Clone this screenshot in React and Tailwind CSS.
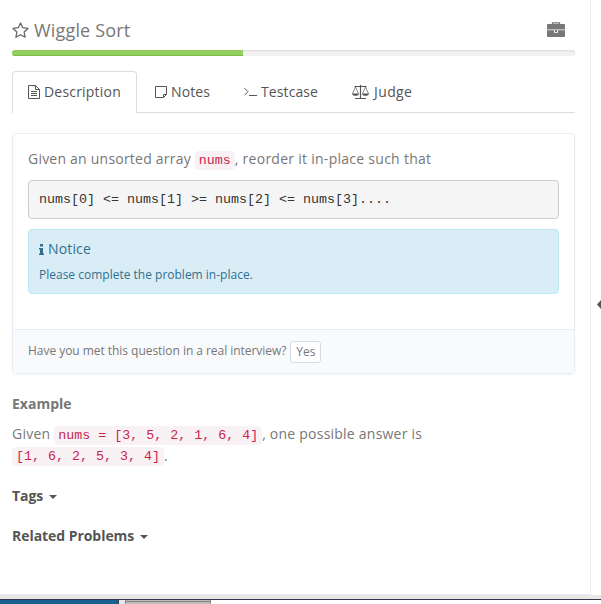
import React from "react";

const MONO = "font-['Liberation_Mono','Courier_New',monospace] text-[13.333px] tracking-normal";

function Code({ children }) {
  return (
    <code className={`${MONO} mt-px h-[19px] shrink-0 whitespace-pre rounded bg-[#f9f2f4] px-1 leading-[19px] text-[#c7254e]`}>
      {children}
    </code>
  );
}

function FileIcon() {
  return (
    <svg width="12" height="14" viewBox="0 0 12 14" fill="none" stroke="#555" className="shrink-0">
      <path d="M.5.5h7l4 4v9H.5zM7.5.5v4h4M3 6.5h6M3 8.5h6M3 10.5h6" />
    </svg>
  );
}

function NoteIcon() {
  return (
    <svg width="12" height="12" viewBox="0 0 12 12" fill="none" stroke="#555" className="shrink-0">
      <path d="M.5.5h11v8l-3 3H.5zM8.500 11.500v-3h3" />
    </svg>
  );
}

function TerminalIcon() {
  return (
    <svg width="13" height="10" viewBox="0 0 13 10" fill="none" stroke="#555" className="shrink-0">
      <path d="M.5 1.200l3.500 3.500-3.500 3.500M5 8.500h8" />
    </svg>
  );
}

function ScaleIcon() {
  return (
    <svg width="17" height="14" viewBox="0 0 17 14" fill="none" stroke="#555" className="shrink-0">
      <path d="M2.500 1.500h12M3 13.500h11" />
      <path strokeWidth="1.200" d="M8.500 0v13" />
      <path strokeWidth=".7" d="M3.500 2l-3 6.500M3.500 2l3 6.500M13.500 2l-3 6.500M13.500 2l3 6.500" />
      <path fill="#555" stroke="none" d="M0 8.500h7c0 1.500-1.500 2.300-3.500 2.300S0 10 0 8.500zM10 8.500h7c0 1.500-1.500 2.300-3.500 2.300S10 10 10 8.500z" />
    </svg>
  );
}

function StarIcon() {
  return (
    <svg width="17" height="16" viewBox="0 0 17 16" fill="none" stroke="#666" strokeWidth="1.300" strokeLinejoin="round">
      <path d="M8.500 1l2.200 4.700 5.300.7-3.900 3.600 1 5.200-4.600-2.500-4.600 2.500 1-5.200L1 6.400l5.300-.7z" />
    </svg>
  );
}

function BriefcaseIcon() {
  return (
    <svg width="18" height="15" viewBox="0 0 18 15">
      <path d="M5.500 3V.800h7V3" fill="none" stroke="#777" strokeWidth="1.300" />
      <rect y="2" width="18" height="13" rx="1" fill="#777" />
      <path fill="#bbb" d="M0 7h18v1.500H0z" />
      <path d="M7.500 8v2.500h3V8" fill="#777" stroke="#eee" />
    </svg>
  );
}

function Caret() {
  return <span className="ml-[6px] mt-[2px] h-0 w-0 border-x-4 border-t-4 border-x-transparent border-t-[#555]" />;
}

export default function App() {
  return (
    <div className="flex h-[604px] w-[601px] flex-col overflow-hidden bg-white font-['Open_Sans',sans-serif] text-sm text-[#777]">
      <div className="flex h-[595px] shrink-0">
        <main className="w-[591px] border-b border-r border-[#e7eef5] pl-3 pr-[15px]">
          <header className="flex h-[50px] items-start justify-between pr-[10px]">
            <h1 className="flex pt-[18px] text-[18px] leading-6">
              <span className="pt-1"><StarIcon /></span>
              <span className="ml-[5px] tracking-[0.17px]">Wiggle Sort</span>
            </h1>
            <div className="pt-[22px]"><BriefcaseIcon /></div>
          </header>
          <div className="h-[6px] overflow-hidden rounded-[3px] bg-[#f2f2f2] shadow-[inset_0_1px_2px_rgba(0,0,0,0.1)]">
            <div className="h-full w-[231px] bg-[#92cf5c] shadow-[inset_0_-1px_0_#7dba49]" />
          </div>

          <nav className="mt-[15px] flex h-[42px] border-b border-[#ddd] text-[#555]">
            <div className="flex h-[42px] w-[125px] items-center gap-1 rounded-t border border-b-0 border-[#ddd] bg-white pb-[2px] pl-[15px] tracking-[0.2px]">
              <FileIcon /><span>Description</span>
            </div>
            <div className="flex w-[90px] items-center gap-1 pl-[18px] tracking-[0.1px]"><NoteIcon /><span>Notes</span></div>
            <div className="flex w-[108px] items-center gap-1 pl-[17px] tracking-[0.1px]"><TerminalIcon /><span>Testcase</span></div>
            <div className="flex items-center gap-[5px] pl-[17px] tracking-[0.4px]"><ScaleIcon /><span>Judge</span></div>
          </nav>

          <section className="mt-5 h-[241px] rounded-sm border border-[#e7ecf5] shadow-[0_1px_2px_rgba(0,0,0,0.05)]">
            <div className="h-[195px] px-[15px] pt-[15px]">
              <p className="flex h-[21px] items-center whitespace-pre leading-5 tracking-[0.22px]">
                <span className="pb-[2px]">{"Given an unsorted array "}</span><Code>nums</Code><span className="pb-[2px] tracking-[0.27px]">, reorder it in-place such that</span>
              </p>
              <pre className={`${MONO} mt-[10px] h-[39px] rounded border border-[#ccc] bg-[#f5f5f5] px-[10px] leading-[37px] text-[#333]`}>
                {"nums[0] <= nums[1] >= nums[2] <= nums[3]...."}
              </pre>
              <div className="mt-[10px] h-[65px] rounded border border-[#bce8f1] bg-[#d9edf7] px-[10px] pt-[9px] text-[#31708f]">
                <h2 className="flex h-5 items-center leading-5 tracking-[0.15px]">
                  <svg width="5" height="11" viewBox="0 0 5 11" fill="currentColor" className="mr-1">
                    <path d="M1 0h3v2.500H1zM0 4h4v5.500h1V11H0V9.500h1v-4H0z" />
                  </svg>
                  Notice
                </h2>
                <p className="mt-[6px] text-xs leading-5">Please complete the problem in-place.</p>
              </div>
            </div>
            <div className="flex h-11 items-center border-t border-[#e7ecf5] bg-[#f9fafc] px-[15px] text-xs">
              <span className="whitespace-nowrap pb-[2px] tracking-[-0.04px]">Have you met this question in a real interview?</span>
              <button className="ml-1 flex h-[22px] w-[31px] items-center justify-center rounded-[3px] border border-[#d6dbe5] bg-white pt-px">Yes</button>
            </div>
          </section>

          <h2 className="mt-5 font-bold leading-5">Example</h2>
          <div className="mt-[10px] tracking-[0.23px]">
            <p className="flex h-[21px] items-center whitespace-pre leading-5">
              <span className="pb-[2px]">{"Given "}</span><Code>nums = [3, 5, 2, 1, 6, 4]</Code><span className="pb-[2px]">, one possible answer is</span>
            </p>
            <p className="flex h-[21px] items-center whitespace-pre leading-5">
              <Code>[1, 6, 2, 5, 3, 4]</Code><span>.</span>
            </p>
          </div>
          <h2 className="mt-5 flex h-5 items-center font-bold leading-5 tracking-[-0.05px] text-[#555]">Tags<Caret /></h2>
          <h2 className="mt-5 flex h-5 items-center font-bold leading-5 tracking-[-0.05px] text-[#555]">Related Problems<Caret /></h2>
        </main>
        <aside className="flex w-[10px] justify-end pt-[300px]">
          <svg width="4" height="9" viewBox="0 0 4 9" fill="#555"><path d="M4 0v9L0 4.500z" /></svg>
        </aside>
      </div>
      <div className="h-1 shrink-0 bg-[#e9e8e6]" />
      <footer className="flex h-[5px] shrink-0 border-t border-[#30384a] bg-white">
        <div className="w-[119px] border-r border-[#30384a] bg-[#175f91]" />
        <div className="w-[6px] bg-[#e8e8e8]" />
        <div className="w-[86px] border-x border-[#8c8a86] bg-[#bdbdba] pt-px"><div className="h-px bg-[#85837f]" /></div>
      </footer>
    </div>
  );
}
